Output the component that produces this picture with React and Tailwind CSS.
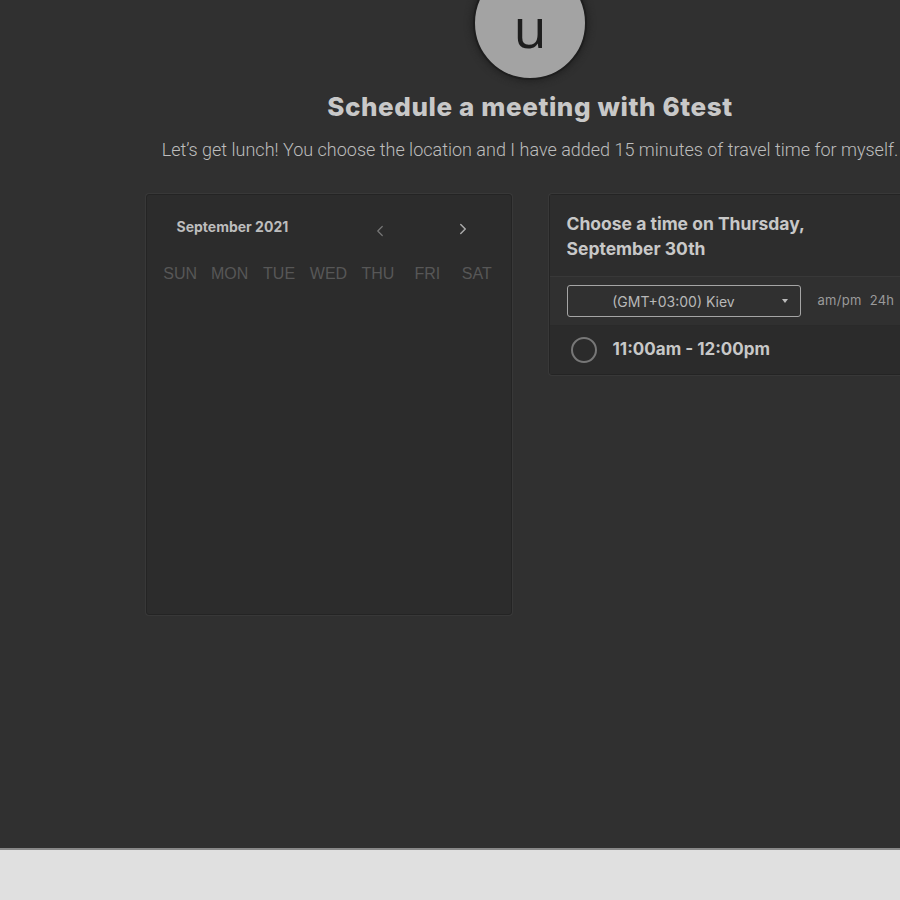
import { ChevronLeft, ChevronRight } from 'lucide-react';

const DAYS = ['SUN', 'MON', 'TUE', 'WED', 'THU', 'FRI', 'SAT'];

const CalendarCard = () => (
  <div className="w-[366px] h-[421px] bg-[#2c2c2c] border border-[#242424] rounded-[3px] shadow-[0_0_0_1px_#383838] px-[9px]">
    <div className="flex items-center h-[62px]">
      <span className="ml-[21px] text-[14px] font-bold text-[#bdbdbd] font-['Inter',sans-serif]">
        September 2021
      </span>
      <ChevronLeft className="ml-[83px] mt-[9px] w-[18px] h-[18px] text-[#777]" strokeWidth={1.6} />
      <ChevronRight className="ml-[65px] mt-[5px] w-[18px] h-[18px] text-[#aaa]" strokeWidth={2} />
    </div>
    <div className="grid grid-cols-7 mt-[7px]">
      {DAYS.map((d) => (
        <div key={d} className="text-center text-[16px] text-[#575757] font-['Liberation_Sans',sans-serif] leading-[20px]">
          {d}
        </div>
      ))}
    </div>
  </div>
);

const TimeCard = () => (
  <div className="w-[366px] bg-[#2c2c2c] border border-[#242424] rounded-[3px] shadow-[0_0_0_1px_#383838] font-['Inter',sans-serif]">
    <div className="h-[82px] px-[17px] pt-[16px] bg-[#2d2d2d] border-b border-[#383838]">
      <p className="text-[17.5px] font-bold leading-[25px] text-[#c8c8c8]">
        Choose a time on Thursday,
        <br />
        September 30th
      </p>
    </div>
    <div className="h-[49px] flex items-center px-[17px] bg-[#303030] border-b border-[#2a2a2a]">
      <div className="relative w-[234px] h-[32px] border border-[#a5a5a5] rounded-[3px] flex items-center justify-center">
        <span className="text-[14px] text-[#b8b8b8] -ml-[20px]">(GMT+03:00) Kiev</span>
        <span className="absolute right-[12px] top-[13px] w-0 h-0 border-l-[3px] border-r-[3px] border-t-[4px] border-l-transparent border-r-transparent border-t-[#bbb]" />
      </div>
      <span className="ml-[17px] text-[13px] text-[#9a9a9a] tracking-[0.3px]">am/pm&nbsp; 24h</span>
    </div>
    <div className="h-[48px] flex items-center pl-[21px] bg-[#2b2b2b]">
      <span className="w-[26px] h-[26px] rounded-full border-2 border-[#777]" />
      <span className="ml-[16px] text-[17px] font-bold text-[#c8c8c8]">11:00am - 12:00pm</span>
    </div>
  </div>
);

export default function App() {
  return (
    <div className="w-[900px] h-[900px] overflow-hidden bg-[#e0e0e0]">
      <div className="h-[850px] bg-[#303030] border-b-2 border-[#888] overflow-hidden">
        <div className="w-[1060px] flex flex-col items-center">
          <div className="w-[114px] h-[114px] -mt-[34px] rounded-full bg-[#a3a3a3] border-2 border-[#1e1e1e] shadow-[0_0_6px_2px_#242424] flex items-center justify-center">
            <span className="text-[54px] leading-none text-[#1e1e1e] font-['Open_Sans',sans-serif] mt-[8px]">u</span>
          </div>
          <h1 className="mt-[7px] text-[26px] font-extrabold text-[#c8c8c8] font-['Inter',sans-serif] tracking-[0.6px]">
            Schedule a meeting with 6test
          </h1>
          <p className="mt-[10px] text-[18px] font-light text-[#bdbdbd] font-['Roboto',sans-serif]">
            Let’s get lunch! You choose the location and I have added 15 minutes of travel time for myself.
          </p>
          <div className="mt-[31px] flex items-start gap-[37px]">
            <CalendarCard />
            <TimeCard />
          </div>
        </div>
      </div>
    </div>
  );
}
